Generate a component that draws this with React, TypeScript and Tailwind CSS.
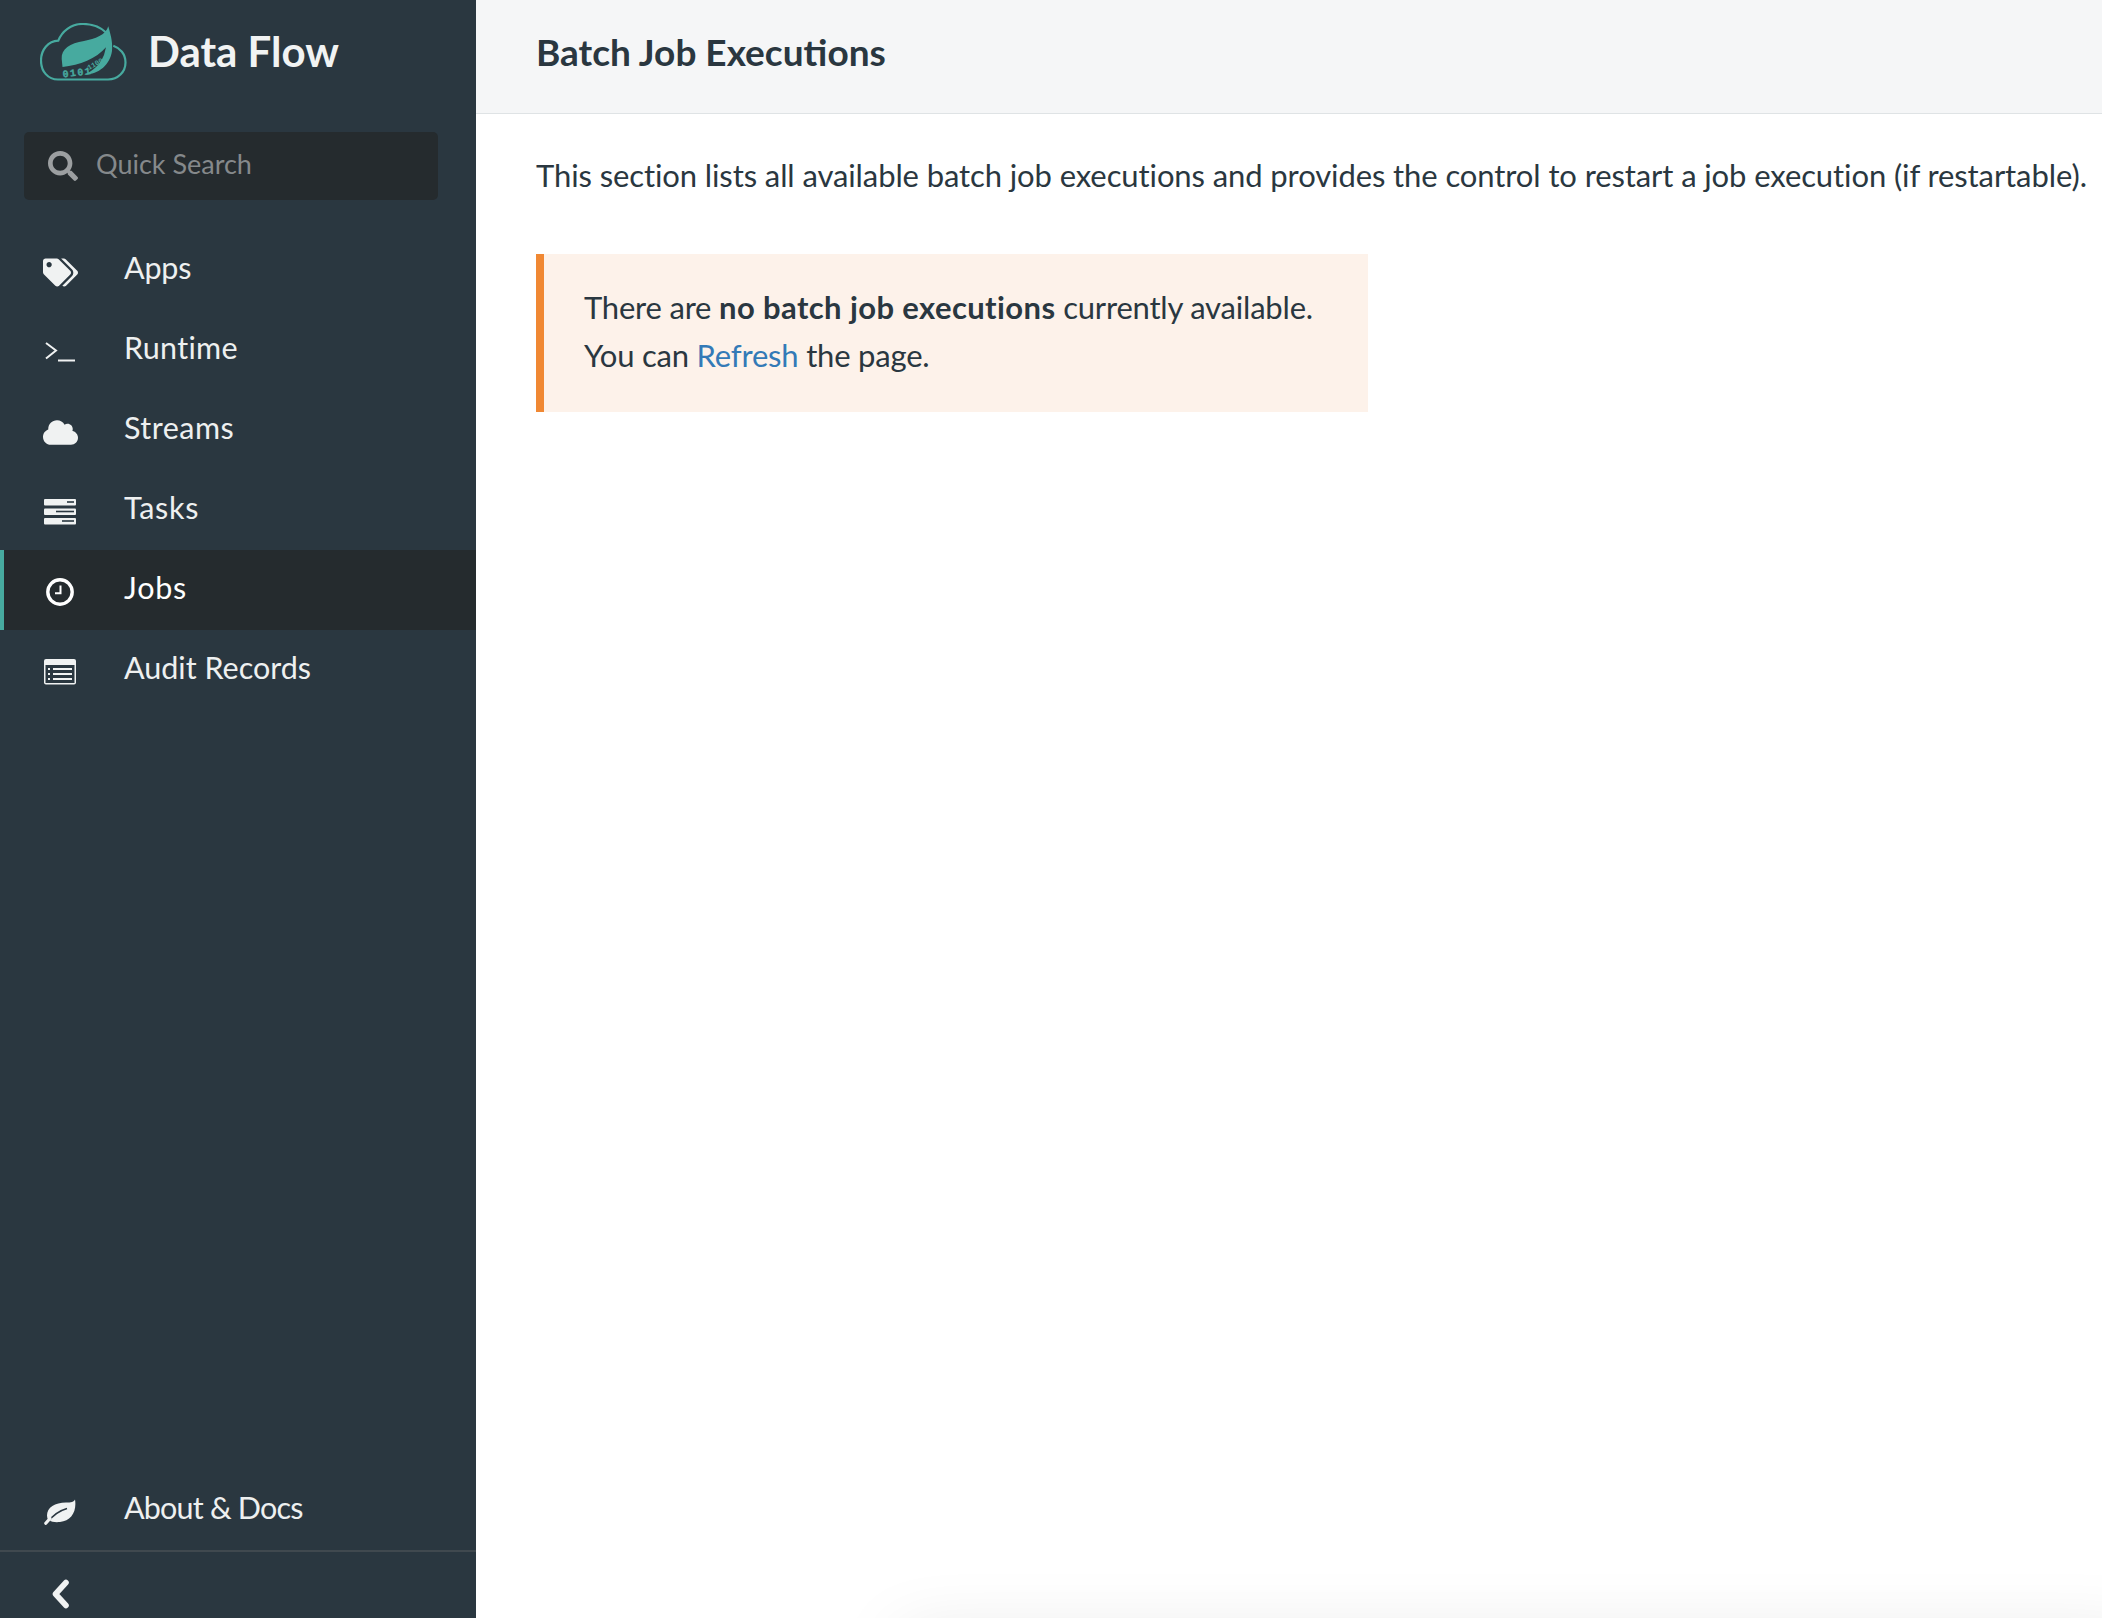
import React from "react";
import { FaTags, FaCloud, FaSearch } from "react-icons/fa";

const font = "[font-family:'Lato','Liberation_Sans',sans-serif]";

function Logo() {
  return (
    <svg width="88" height="60" viewBox="0 0 88 60" className="block">
      <path
        d="M66 9.5 C59 3 50 0.8 42 1 C31 1.2 22 8 18.3 17.7 C8 18 1 27 1 37.5 C1 48.5 8 56.5 18 56.5 L68 56.5 C78 56.5 85.5 49 85.5 39.5 C85.5 31 80 25 73.3 22.7"
        fill="none"
        stroke="#47aa9f"
        strokeWidth="2.2"
      />
      <path
        d="M68.3 3.3 C66 12 55 16 44 18 C30 20 21 26 21.7 36 L22.5 44 C40 42 56 36 66 24.3 L64 32 C60 42 52 49 44 51.5 C58 52 70 42 72 28 C73 18 70 10 68.3 3.3 Z"
        fill="#47aa9f"
      />
      <text x="23" y="54.5" fontSize="10" fontWeight="700" fill="#47aa9f" stroke="#47aa9f" strokeWidth="0.35" fontFamily="'Liberation Mono', monospace" letterSpacing="1.4" transform="rotate(-7 23 54.5)">0101</text>
      <text x="49" y="47" fontSize="7" fontWeight="700" fill="#47aa9f" fontFamily="'Liberation Mono', monospace" transform="rotate(-30 49 47)">1100</text>
    </svg>
  );
}

function TerminalIcon() {
  return (
    <svg width="32" height="20" viewBox="0 0 32 20" fill="none" stroke="#f0f2f2" strokeWidth="2">
      <path d="M2 1 L12 8.5 L2 16.5" />
      <path d="M14 18.5 H31" />
    </svg>
  );
}

function TasksIcon() {
  return (
    <svg width="32" height="26" viewBox="0 0 32 26">
      <rect x="0" y="0" width="32" height="6.5" rx="1" fill="#f0f2f2" />
      <rect x="0" y="9.5" width="32" height="6.5" rx="1" fill="#f0f2f2" />
      <rect x="0" y="19" width="32" height="6.5" rx="1" fill="#f0f2f2" />
      <rect x="23" y="2.2" width="7" height="1.6" fill="#2a3740" />
      <rect x="12" y="11.7" width="18" height="1.6" fill="#2a3740" />
      <rect x="18" y="21.2" width="12" height="1.6" fill="#2a3740" />
    </svg>
  );
}

function ClockIcon() {
  return (
    <svg width="28" height="28" viewBox="0 0 28 28" fill="none" stroke="#ffffff">
      <circle cx="14" cy="14" r="12.2" strokeWidth="3.4" />
      <path d="M14.5 7.5 V15.2 H9" strokeWidth="2" />
    </svg>
  );
}

function AuditIcon() {
  return (
    <svg width="32" height="26" viewBox="0 0 32 26">
      <rect x="0" y="0" width="32" height="25.5" rx="2" fill="#f0f2f2" />
      <rect x="1.5" y="6" width="29" height="18" fill="#2a3740" />
      <rect x="4" y="9" width="2" height="2" fill="#f0f2f2" />
      <rect x="4" y="14" width="2" height="2" fill="#f0f2f2" />
      <rect x="4" y="19" width="2" height="2" fill="#f0f2f2" />
      <rect x="9" y="9" width="19" height="2" fill="#f0f2f2" />
      <rect x="9" y="14" width="19" height="2" fill="#f0f2f2" />
      <rect x="9" y="19" width="19" height="2" fill="#f0f2f2" />
    </svg>
  );
}

function LeafIcon() {
  return (
    <svg width="32" height="26" viewBox="0 0 32 26">
      <path
        d="M31 0.5 C30 3 27 3.5 22 3.5 C11 3.5 3 8.5 3 16.5 C3 18 3.4 19.5 4.2 21 C8 23.2 12 23.4 16 23 C27 22 33 13 31 0.5 Z"
        fill="#f0f2f2"
      />
      <path d="M3 24 C8 17 14 12 23 9.5" fill="none" stroke="#2a3740" strokeWidth="1.6" />
      <path d="M1.8 24.2 L6 19.5" fill="none" stroke="#f0f2f2" strokeWidth="3.2" strokeLinecap="round" />
    </svg>
  );
}

function ChevronIcon() {
  return (
    <svg width="20" height="30" viewBox="0 0 20 30" fill="none">
      <path d="M16 3.5 L5.5 15 L16 26.5" stroke="#f0f2f2" strokeWidth="5.6" strokeLinejoin="round" strokeLinecap="round" />
    </svg>
  );
}

function NavItem({
  icon,
  label,
  active,
  labelClass,
}: {
  icon: React.ReactNode;
  label: string;
  active?: boolean;
  labelClass?: string;
}) {
  return (
    <div
      className={
        active
          ? "flex h-[80px] items-center bg-[#252b2e] border-l-4 border-[#47aa9f] pl-[36px] pb-[6px] text-white"
          : "flex h-[80px] items-center border-l-4 border-transparent pl-[36px] pb-[6px] text-[#eef0f0]"
      }
    >
      <span className="flex w-[40px] shrink-0 translate-y-[5px] items-center justify-center">{icon}</span>
      <span className={`ml-[44px] text-[30.5px] leading-none ${labelClass ?? ""}`}>{label}</span>
    </div>
  );
}

export default function App() {
  return (
    <div className={`relative flex h-[1618px] w-[2102px] overflow-hidden bg-white ${font}`}>
      <aside className="flex w-[476px] shrink-0 flex-col bg-[#2a3740]">
        <div className="flex h-[132px] items-start pl-[40px] pt-[23px]">
          <Logo />
          <span className="ml-[20px] text-[42px] font-bold leading-[56px] text-[#f1f3f3]">Data Flow</span>
        </div>
        <div className="mx-[24px] flex h-[68px] w-[414px] items-center rounded-[5px] bg-[#252b2e] pl-[24px]">
          <FaSearch className="text-[30px] text-[#9c9fa1]" />
          <span className="ml-[18px] pb-[3px] text-[27px] text-[#85898b]">Quick Search</span>
        </div>
        <nav className="mt-[30px] flex flex-col">
          <NavItem icon={<FaTags className="text-[35px] text-[#f0f2f2]" />} label="Apps" labelClass="tracking-[-0.2px]" />
          <NavItem icon={<TerminalIcon />} label="Runtime" labelClass="tracking-[0.3px]" />
          <NavItem icon={<FaCloud className="text-[35px] text-[#f0f2f2]" />} label="Streams" labelClass="tracking-[0.5px]" />
          <NavItem icon={<TasksIcon />} label="Tasks" labelClass="tracking-[0.7px]" />
          <NavItem icon={<ClockIcon />} label="Jobs" labelClass="tracking-[0.8px]" active />
          <NavItem icon={<AuditIcon />} label="Audit Records" />
        </nav>
        <div className="mt-auto">
          <NavItem icon={<LeafIcon />} label="About & Docs" labelClass="tracking-[-0.8px]" />
          <div className="flex h-[68px] items-start border-t-2 border-[#40494f] pl-[50px] pt-[27px]">
            <ChevronIcon />
          </div>
        </div>
      </aside>
      <main className="flex min-w-0 flex-1 flex-col text-[#2a3740]">
        <header className="flex h-[114px] items-center border-b border-[#dfe3e5] bg-[#f5f6f7] pb-[9px] pl-[60px]">
          <h1 className="text-[37px] font-bold">Batch Job Executions</h1>
        </header>
        <div className="pl-[60px] pt-[36px]">
          <p className="whitespace-nowrap text-[31px] leading-[50px] tracking-[-0.1px]">
            This section lists all available batch job executions and provides the control to restart a job execution (if restartable).
          </p>
          <div className="mt-[54px] h-[158px] w-[832px] border-l-[8px] border-[#f08833] bg-[#fdf2ea] pl-[40px] pt-[29px] text-[31px] leading-[48px] tracking-[-0.2px]">
            <p>
              There are <strong className="font-bold tracking-[0.4px]">no batch job executions</strong> currently available.
            </p>
            <p>
              You can <span className="text-[#337ab7]">Refresh</span> the page.
            </p>
          </div>
        </div>
      </main>
      <div className="absolute bottom-[-60px] left-[900px] right-[-40px] h-[40px] shadow-[0_0_70px_rgba(0,0,0,0.13)]" />
    </div>
  );
}
